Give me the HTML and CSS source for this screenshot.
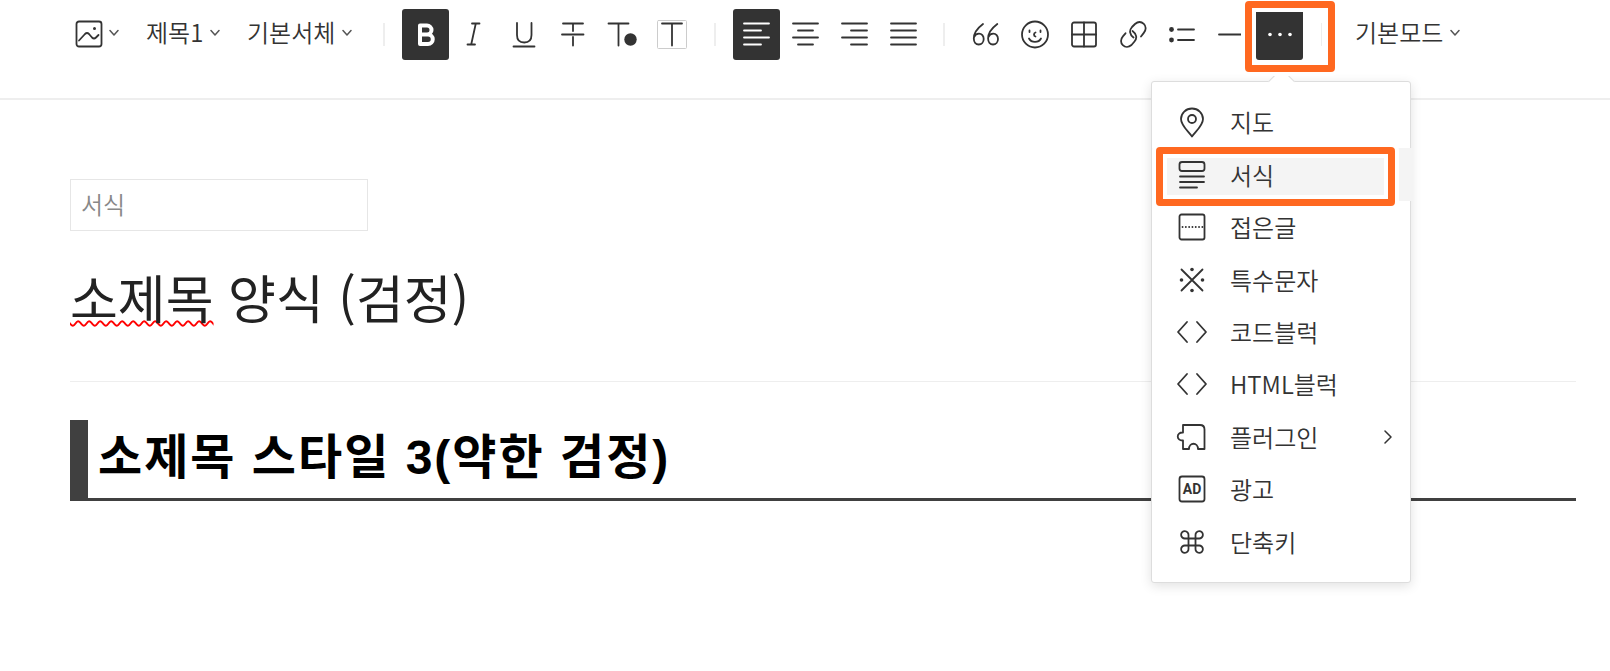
FILE: index.html
```html
<!DOCTYPE html>
<html lang="ko">
<head>
    <meta charset="UTF-8">
    <meta name="viewport" content="width=device-width, initial-scale=1.0">
    <title>글쓰기</title>
    <link rel="stylesheet" href="styles.css">
</head>
<body>
    <div class="toolbar">
        <div class="group group-drop">
            <button class="drop" type="button" aria-label="첨부">
                <svg class="icon-image" width="28" height="28" viewBox="0 0 28 28"><rect x="1.5" y="1.5" width="25" height="25" rx="2.5"/><path d="M4 20.500l6-6.500q2-2 4 0l3 3.500q2 2 4 0l2.500-2.500"/><circle class="fill" cx="19.500" cy="8.500" r="1.500"/></svg>
                <svg class="chevron" width="10" height="8" viewBox="0 0 10 8"><path d="M1 1.500l4 4.500 4-4.500"/></svg>
            </button>
            <label class="drop">
                <select aria-label="문단 모양"><option>제목1</option></select>
                <svg class="chevron" width="10" height="8" viewBox="0 0 10 8"><path d="M1 1.500l4 4.500 4-4.500"/></svg>
            </label>
            <label class="drop">
                <select aria-label="글꼴"><option>기본서체</option></select>
                <svg class="chevron" width="10" height="8" viewBox="0 0 10 8"><path d="M1 1.500l4 4.500 4-4.500"/></svg>
            </label>
        </div>
        <span class="divider"></span>
        <div class="group group-text">
            <button class="tool active" type="button" aria-label="굵게">
                <svg width="32" height="32" viewBox="0 0 32 32"><path class="bold" d="M10 6.500h7a4.200 4.200 0 0 1 0 9H10zM10 15.500h8a4.500 4.500 0 0 1 0 9.500H10z"/></svg>
            </button>
            <button class="tool" type="button" aria-label="기울임">
                <svg width="32" height="32" viewBox="0 0 32 32"><path d="M13 4.500h7.500M8.500 25.500h7.500M16.800 4.500l-4.600 21"/></svg>
            </button>
            <button class="tool" type="button" aria-label="밑줄">
                <svg width="32" height="32" viewBox="0 0 32 32"><path d="M9 4v12c0 5 3 7.500 7.200 7.500s7.300-2.500 7.300-7.500V4M5.500 27.500h21"/></svg>
            </button>
            <button class="tool" type="button" aria-label="취소선">
                <svg width="32" height="32" viewBox="0 0 32 32"><path d="M6 4.500h20M16 4.500v7.500M16 18v8.500M5 15.500h21.500"/></svg>
            </button>
            <button class="tool" type="button" aria-label="글자색">
                <svg width="32" height="32" viewBox="0 0 32 32"><path d="M2.500 4.500h20M12.500 4.500v22"/><circle class="fill" cx="24.500" cy="20.500" r="6.200"/></svg>
            </button>
            <button class="tool" type="button" aria-label="배경색">
                <svg width="32" height="32" viewBox="0 0 32 32"><rect class="box" x="2.500" y="1.500" width="29" height="28" rx="1"/><path d="M7 4.500h20M17 4.500v22"/></svg>
            </button>
        </div>
        <span class="divider"></span>
        <div class="group">
            <button class="tool active" type="button" aria-label="왼쪽 정렬">
                <svg width="32" height="32" viewBox="0 0 32 32"><path d="M3 4.500h25M3 11.500h17M3 18.500h25M3 25.500h17"/></svg>
            </button>
            <button class="tool" type="button" aria-label="가운데 정렬">
                <svg width="32" height="32" viewBox="0 0 32 32"><path d="M3 4.500h25M8 11.500h15M3 18.500h25M8 25.500h15"/></svg>
            </button>
            <button class="tool" type="button" aria-label="오른쪽 정렬">
                <svg width="32" height="32" viewBox="0 0 32 32"><path d="M3 4.500h25M12 11.500h16M3 18.500h25M12 25.500h16"/></svg>
            </button>
            <button class="tool" type="button" aria-label="양쪽 정렬">
                <svg width="32" height="32" viewBox="0 0 32 32"><path d="M3 4.500h25M3 11.500h25M3 18.500h25M3 25.500h25"/></svg>
            </button>
        </div>
        <span class="divider"></span>
        <div class="group">
            <button class="tool" type="button" aria-label="인용">
                <svg width="32" height="32" viewBox="0 0 32 32"><path d="M13 5C7 9.500 3.800 14 3.800 19.500c0 3.500 2 6 4.900 6s5-2.400 5-5.500-2-5.300-4.700-5.300c-2 0-4 1.200-4.800 3.300M27.300 5c-6 4.500-9.200 9-9.200 14.500 0 3.500 2 6 4.900 6s5-2.400 5-5.500-2-5.300-4.700-5.300c-2 0-4 1.200-4.800 3.300"/></svg>
            </button>
            <button class="tool" type="button" aria-label="이모티콘">
                <svg width="32" height="32" viewBox="0 0 32 32"><circle cx="16" cy="15.500" r="13"/><path d="M10.500 11.500v1.500M21.500 11.500v1.500M16.500 13.500c-2 .5-2 3.500 0 4M10 19.500c2.500 4.500 9.500 4.500 12 0"/></svg>
            </button>
            <button class="tool" type="button" aria-label="표">
                <svg width="32" height="32" viewBox="0 0 32 32"><rect x="4" y="3.500" width="24" height="24" rx="2"/><path d="M16 3.500v24M4 15.500h24"/></svg>
            </button>
            <button class="tool" type="button" aria-label="링크">
                <svg width="32" height="32" viewBox="0 0 32 32"><path d="M16.500 18.500c-4-3-4.500-7-1.500-10.500l3-3c3-2.600 6.500-2.300 8.800-.1s2.600 6 0 9l-2.800 3.600M15.500 12c4 3 5 7 2 10.500l-3 3.500c-3 2.600-6.500 2.300-8.700.2s-2.500-6 .1-8.900l2.600-3"/></svg>
            </button>
            <button class="tool" type="button" aria-label="목록">
                <svg width="32" height="32" viewBox="0 0 32 32"><circle class="fill" cx="5.500" cy="10.500" r="2.400"/><circle class="fill" cx="5.500" cy="21" r="2.400"/><path d="M12 10.500h16M12 21h16"/></svg>
            </button>
            <button class="tool" type="button" aria-label="구분선">
                <svg width="32" height="32" viewBox="0 0 32 32"><path d="M4 15.500h23"/></svg>
            </button>
            <div class="more">
                <button class="tool active" type="button" aria-label="더보기" aria-expanded="true">
                    <svg width="32" height="32" viewBox="0 0 32 32"><circle class="fill" cx="6" cy="15.500" r="1.800"/><circle class="fill" cx="16" cy="15.500" r="1.800"/><circle class="fill" cx="26" cy="15.500" r="1.800"/></svg>
                </button>
                <ul class="menu">
                    <li><button type="button">
                        <svg width="32" height="32" viewBox="0 0 32 32"><path d="M16 30.500C12 25 5 19.500 5 13a11 10.500 0 0 1 22 0C27 19.500 20 25 16 30.500z"/><circle cx="16" cy="13" r="4"/></svg>
                        <span>지도</span>
                    </button></li>
                    <li><button class="selected" type="button">
                        <svg width="32" height="32" viewBox="0 0 32 32"><rect x="3.500" y="3" width="25" height="9" rx="2.500"/><path d="M4 17.500h24M4 23h24M4 28.500h17"/></svg>
                        <span>서식</span>
                    </button></li>
                    <li><button type="button">
                        <svg width="32" height="32" viewBox="0 0 32 32"><rect x="3.500" y="3.500" width="25" height="25" rx="2"/><path class="dots" d="M6.500 16h20"/></svg>
                        <span>접은글</span>
                    </button></li>
                    <li><button type="button">
                        <svg width="32" height="32" viewBox="0 0 32 32"><path d="M5.500 5.500l21 21M26.500 5.500l-21 21"/><circle class="fill" cx="16" cy="5.500" r="1.800"/><circle class="fill" cx="16" cy="26.500" r="1.800"/><circle class="fill" cx="5.500" cy="16" r="1.800"/><circle class="fill" cx="26.500" cy="16" r="1.800"/></svg>
                        <span>특수문자</span>
                    </button></li>
                    <li><button type="button">
                        <svg width="32" height="32" viewBox="0 0 32 32"><path d="M11 6L2 16l9 10M21 6l9 10-9 10"/></svg>
                        <span>코드블럭</span>
                    </button></li>
                    <li><button type="button">
                        <svg width="32" height="32" viewBox="0 0 32 32"><path d="M11 6L2 16l9 10M21 6l9 10-9 10"/></svg>
                        <span>HTML블럭</span>
                    </button></li>
                    <li><button type="button">
                        <svg width="32" height="32" viewBox="0 0 32 32"><path d="M7 4h17q4.500 0 4.500 4.500V28H22c0-7-9-7-9 0H7v-8.500c-7 .5-7-8.500 0-8z"/></svg>
                        <span>플러그인</span>
                        <svg class="next" width="10" height="14" viewBox="0 0 10 14"><path d="M2 1l6 6-6 6"/></svg>
                    </button></li>
                    <li><button type="button">
                        <svg width="32" height="32" viewBox="0 0 32 32"><rect x="3.500" y="3.500" width="25" height="25" rx="2.500"/><text class="ad" x="16" y="21" text-anchor="middle">AD</text></svg>
                        <span>광고</span>
                    </button></li>
                    <li><button type="button">
                        <svg width="32" height="32" viewBox="0 0 32 32"><path d="M12.500 12.500H9A3.700 3.700 0 1 1 12.500 9v14A3.700 3.700 0 1 1 9 19.500h14A3.700 3.700 0 1 1 19.500 23V9A3.700 3.700 0 1 1 23 12.500z"/></svg>
                        <span>단축키</span>
                    </button></li>
                </ul>
                <span class="mark mark-more"></span>
                <span class="mark mark-item"></span>
            </div>
        </div>
        <span class="divider divider-mode"></span>
        <label class="drop">
            <select aria-label="에디터 모드"><option>기본모드</option></select>
            <svg class="chevron" width="10" height="8" viewBox="0 0 10 8"><path d="M1 1.500l4 4.500 4-4.500"/></svg>
        </label>
    </div>

    <main class="editor">
        <input class="template-name" type="text" value="서식" aria-label="서식 이름">
        <h1 class="title"><span class="misspelled">소제목</span> 양식 (검정)</h1>
        <hr class="line">
        <h2 class="subtitle">소제목 스타일 3(약한 검정)</h2>
    </main>
</body>
</html>
```
FILE: styles.css
```css
* {
    margin: 0;
    padding: 0;
    box-sizing: border-box;
}

body {
    min-height: 100vh;
    font-family: "Noto Sans CJK KR", sans-serif;
    font-size: 24px;
    font-weight: 350;
    color: #333;
    background: #fff;
}

button, select, input {
    font: inherit;
    color: inherit;
    background: none;
    border: none;
}

button, select {
    cursor: pointer;
}

svg {
    display: block;
    flex: none;
    fill: none;
    stroke: currentColor;
    stroke-width: 1.8;
    stroke-linecap: round;
    stroke-linejoin: round;
}

svg .fill {
    fill: currentColor;
    stroke: none;
}

/* toolbar */
.toolbar {
    display: flex;
    align-items: flex-start;
    padding: 9px 32px 38px 75px;
    border-bottom: 2px solid #eee;
}

.group {
    display: flex;
    gap: 2px;
}

.group-drop {
    gap: 27px;
    padding-right: 15px;
}

.group-text {
    padding-right: 4px;
}

.drop {
    display: flex;
    align-items: center;
    gap: 6px;
    height: 48px;
}

.drop select {
    appearance: none;
    padding-bottom: 2px;
    line-height: 36px;
}

.icon-image {
    margin-top: 2px;
}

.chevron {
    color: #555;
    stroke-width: 1.5;
    pointer-events: none;
}

.divider {
    width: 2px;
    height: 23px;
    margin: 14px 17px 0 16px;
    background: #eee;
}

.divider-mode {
    width: 1px;
    margin: 14px 33px 0 18px;
}

.tool {
    display: flex;
    align-items: center;
    justify-content: center;
    width: 47px;
    height: 51px;
    border-radius: 3px;
}

.tool.active {
    background: #333;
    color: #fff;
}

.bold {
    stroke-width: 4;
}

.box {
    stroke: #ccc;
    stroke-width: 1;
}

/* more menu */
.more {
    position: relative;
}

.menu {
    position: absolute;
    top: 72px;
    left: -105px;
    display: grid;
    grid-auto-rows: 1fr;
    width: 260px;
    height: 502px;
    padding: 14px 0;
    list-style: none;
    background: #fff;
    border: 1px solid #ddd;
    border-radius: 3px;
    box-shadow: 0 3px 12px rgba(0, 0, 0, 0.12);
}

.menu::before {
    content: "";
    position: absolute;
    top: -10px;
    left: 120px;
    width: 18px;
    height: 18px;
    background: #fff;
    border: 1px solid #ddd;
    border-right: none;
    border-bottom: none;
    transform: rotate(45deg);
}

.menu button {
    display: flex;
    align-items: center;
    gap: 22px;
    width: 261px;
    height: 100%;
    padding: 0 20px 0 24px;
    line-height: 36px;
}

.menu .selected {
    background: #f4f4f4;
}

.dots {
    stroke-width: 1.8;
    stroke-dasharray: 0.1 3.2;
}

.next {
    margin-left: auto;
    stroke-width: 1.5;
}

.ad {
    font-family: Roboto, sans-serif;
    font-size: 14px;
    font-weight: 700;
    fill: currentColor;
    stroke: none;
}

.mark {
    position: absolute;
    border: 7px solid #ff6820;
    border-radius: 4px;
    box-shadow: 0 0 0 4px #fff, inset 0 0 0 4px #fff;
    pointer-events: none;
}

.mark-more {
    top: -8px;
    left: -11px;
    width: 90px;
    height: 71px;
}

.mark-item {
    top: 138px;
    left: -100px;
    width: 239px;
    height: 59px;
}

/* editor */
.editor {
    padding: 79px 34px 0 70px;
}

.template-name {
    display: block;
    width: 298px;
    height: 52px;
    padding: 0 10px 4px;
    border: 1px solid #e6e6e6;
    color: #888;
}

.title {
    margin-top: 34px;
    font-size: 52px;
    font-weight: 400;
    line-height: 64px;
    color: #222;
}

.misspelled {
    text-decoration: underline wavy #f00 2px;
    text-decoration-skip-ink: none;
}

.line {
    margin-top: 52px;
    border: none;
    border-top: 1px solid #eee;
}

.subtitle {
    margin-top: 38px;
    padding: 6px 10px 8px;
    border-left: 18px solid #404040;
    border-bottom: 3px solid #404040;
    font-family: "Liberation Sans", "Noto Sans CJK KR", sans-serif;
    font-size: 48px;
    font-weight: 700;
    line-height: 64px;
    letter-spacing: 2px;
    color: #000;
}
```
